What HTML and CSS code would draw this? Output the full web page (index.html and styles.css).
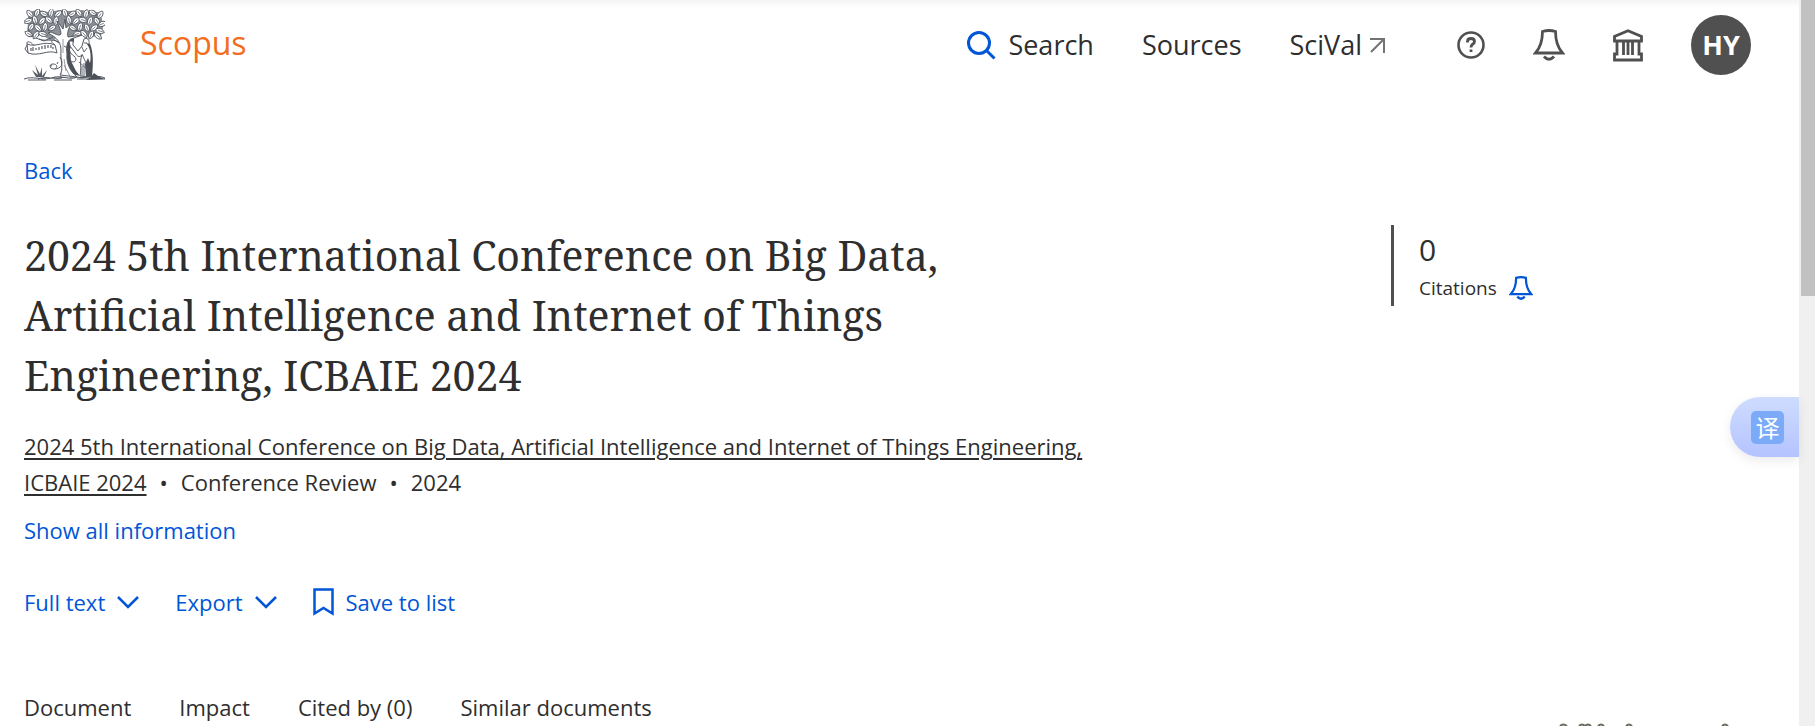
FILE: index.html
```html
<!DOCTYPE html>
<html lang="en">
<head>
    <meta charset="UTF-8">
    <meta name="viewport" content="width=device-width, initial-scale=1.0">
    <title>Scopus - Document details</title>
    <link rel="stylesheet" href="styles.css">
</head>
<body>

<div class="page">
    <header class="header">
        <a class="brand" href="#">
            <svg class="tree" viewBox="0 0 81 72" width="81" height="72" aria-hidden="true">
                <defs>
                    <g id="leaf">
                        <path d="M0-4.6C3-2.6 3.4 1.6 0 4.6C-3.4 1.6-3-2.6 0-4.6Z" fill="#fff" stroke="#565b64" stroke-width=".9"/>
                        <path d="M0-2V3.4" stroke="#565b64" stroke-width=".7"/>
                    </g>
                </defs>
                <!-- canopy -->
                <path d="M4 3L14 1 24 3 36 1 46 2 58 1 68 3 76 3 78 10 79 20 77 27 66 28 57 25 48 29 34 29 26 31 18 26 8 28 3 23 4 14Z" fill="#8c9096"/>
                <use href="#leaf" transform="translate(6 5) rotate(-40)"/>
                <use href="#leaf" transform="translate(13 4) rotate(25)"/>
                <use href="#leaf" transform="translate(20 5) rotate(-65)"/>
                <use href="#leaf" transform="translate(27 4) rotate(10)"/>
                <use href="#leaf" transform="translate(34 5) rotate(50)"/>
                <use href="#leaf" transform="translate(41 4) rotate(-20)"/>
                <use href="#leaf" transform="translate(48 5) rotate(60)"/>
                <use href="#leaf" transform="translate(55 4) rotate(-35)"/>
                <use href="#leaf" transform="translate(62 5) rotate(15)"/>
                <use href="#leaf" transform="translate(69 4) rotate(-60)"/>
                <use href="#leaf" transform="translate(76 6) rotate(35)"/>
                <use href="#leaf" transform="translate(4 12) rotate(70)"/>
                <use href="#leaf" transform="translate(11 11) rotate(-15)"/>
                <use href="#leaf" transform="translate(18 12) rotate(40)"/>
                <use href="#leaf" transform="translate(25 11) rotate(-50)"/>
                <use href="#leaf" transform="translate(32 12) rotate(5)"/>
                <use href="#leaf" transform="translate(45 11) rotate(-10)"/>
                <use href="#leaf" transform="translate(52 12) rotate(45)"/>
                <use href="#leaf" transform="translate(59 11) rotate(-70)"/>
                <use href="#leaf" transform="translate(66 12) rotate(20)"/>
                <use href="#leaf" transform="translate(73 12) rotate(-30)"/>
                <use href="#leaf" transform="translate(78 15) rotate(65)"/>
                <use href="#leaf" transform="translate(7 18) rotate(30)"/>
                <use href="#leaf" transform="translate(14 19) rotate(-45)"/>
                <use href="#leaf" transform="translate(21 18) rotate(10)"/>
                <use href="#leaf" transform="translate(28 19) rotate(60)"/>
                <use href="#leaf" transform="translate(49 19) rotate(-60)"/>
                <use href="#leaf" transform="translate(56 18) rotate(15)"/>
                <use href="#leaf" transform="translate(63 19) rotate(-25)"/>
                <use href="#leaf" transform="translate(70 19) rotate(50)"/>
                <use href="#leaf" transform="translate(76 22) rotate(-70)"/>
                <use href="#leaf" transform="translate(5 25) rotate(-60)"/>
                <use href="#leaf" transform="translate(12 26) rotate(35)"/>
                <use href="#leaf" transform="translate(19 25) rotate(-75)"/>
                <use href="#leaf" transform="translate(53 25) rotate(70)"/>
                <use href="#leaf" transform="translate(60 25) rotate(-40)"/>
                <use href="#leaf" transform="translate(67 26) rotate(25)"/>
                <use href="#leaf" transform="translate(74 27) rotate(-50)"/>
                <!-- shaded side of the trunk and the vine -->
                <path d="M42 28L50 27 50 32 46 40 47 52 52 62 56 67 48 65 43 58 40 46Z" fill="#4c5059"/>
                <path d="M36 66C40 60 36 50 37 42C37 34 34 29 24 24L27 23C33 26 36 27 37 25C37 20 34 16 33 12L36 16 39 20 41 10 42 19 48 14C44 20 43 24 44 28L58 26 47 30C43 32 42 38 43 45C42 54 46 62 53 68Z" fill="#fff" stroke="#565b64" stroke-width="1"/>
                <path d="M39 30V44M40 50L42 62M38 60L36 69M40 56L47 69" fill="none" stroke="#7c8087" stroke-width=".8"/>
                <path d="M40 37C46 40 46 45 50 47C54 50 51 55 47 52M36 48C40 54 38 60 30 60C25 60 25 55 29 55C33 55 34 58 31 60M28 57L26 56M33 55L34 53" fill="none" stroke="#565b64" stroke-width="1"/>
                <!-- banner -->
                <path d="M3 35C12 39 20 31 31 36L33 44C24 40 15 48 4 44Z" fill="#fff" stroke="#565b64" stroke-width="1"/>
                <path d="M3 35C2 31 8 33 10 37M31 36C26 33 27 30 31 31L35 34M4 44L1 40 3 36M15 30C22 33 28 29 34 33M12 29L20 32 29 28" fill="none" stroke="#565b64" stroke-width="1"/>
                <path d="M7 39V42M9 38V42M12 39V41M15 38V41M18 37V40M21 36V40M24 36V39M27 36V39M29 38V40" fill="none" stroke="#565b64" stroke-width="1.200"/>
                <!-- old man -->
                <path d="M60 30C63 28 66 31 65 35C68 41 68 54 66 68L56 67C58 58 55 54 58 46C55 49 53 47 52 45L46 37 45 32 49 32 49 36 54 42 58 37Z" fill="#fff" stroke="#565b64" stroke-width="1"/>
                <path d="M62 34C66 38 68 46 66 54L64 49 61 55 62 68 68 68C69 57 70 44 66 35Z" fill="#4c5059"/>
                <path d="M58 38L60 43 63 39M58 45L62 54M55 53L64 61M60 54V67M58 57V67M60 34H63" fill="none" stroke="#565b64" stroke-width=".9"/>
                <!-- ground and plants -->
                <path d="M0 70C10 66 18 72 28 69C37 65 45 72 53 68C61 71 71 64 81 69M14 70C22 66 30 71 38 69M4 71H22M30 71H48M53 70H81" fill="none" stroke="#565b64" stroke-width="1.1"/>
                <path d="M67 68L70 64 74 67 80 70 62 71Z" fill="#4c5059"/>
                <path d="M12 68L8 61 14 66 11 56 16 65 18 58 18 67 23 61 20 68Z" fill="#565b64"/>
            </svg>
            <span class="brand-name">Scopus</span>
        </a>
        <nav class="nav">
            <a class="nav-link search" href="#">
                <svg width="29" height="29" viewBox="0 0 29 29" aria-hidden="true"><circle cx="12" cy="12" r="10.5"/><path d="M19 19L27.500 27.500"/></svg>
                Search
            </a>
            <a class="nav-link" href="#">Sources</a>
            <a class="nav-link external" href="#">SciVal
                <svg width="15" height="15" viewBox="0 0 15 15" aria-hidden="true"><path d="M0 1H14V15M14 1L1 14"/></svg>
            </a>
        </nav>
        <div class="tools">
            <button type="button" class="icon-button" aria-label="Help">
                <svg width="28" height="28" viewBox="0 0 28 28"><circle cx="14" cy="14" r="12.500" stroke-width="2.600"/><path d="M10.500 11.500V10.500Q10.500 7.500 14 7.500Q17.500 7.500 17.500 10.500Q17.500 12 15.800 13Q14 14.200 14 16.500M14 18.600V21" stroke-width="2.800"/></svg>
            </button>
            <button type="button" class="icon-button" aria-label="Alerts">
                <svg width="32" height="32" viewBox="0 0 32 32"><path d="M9.500 2.500Q16 0.500 22.500 2.500Q22.500 16 29.500 24H2.500Q9.500 16 9.500 2.500Z" stroke-width="2.800"/><path d="M11 27.500Q16 33 21 27.500" stroke-width="3"/></svg>
            </button>
            <button type="button" class="icon-button" aria-label="Institution">
                <svg width="30" height="33" viewBox="0 0 30 33"><path d="M1.500 12V7.500L15 1.800 28.500 7.500V12ZM4 12V25H1.500V31H28.500V25H26V12M10.500 12V26M15 12V26M19.500 12V26" stroke-width="2.800"/></svg>
            </button>
            <button type="button" class="avatar">HY</button>
        </div>
    </header>

    <main class="content">
        <a class="link" href="#">Back</a>
        <div class="record">
            <div class="record-text">
                <h1>2024 5th International Conference on Big Data, Artificial Intelligence and Internet of Things Engineering, ICBAIE 2024</h1>
                <p class="source">
                    <a href="#">2024 5th International Conference on Big Data, Artificial Intelligence and Internet of Things Engineering, ICBAIE 2024</a><span class="dot">•</span>Conference Review<span class="dot">•</span>2024
                </p>
                <button type="button" class="link">Show all information</button>
            </div>
            <aside class="metrics">
                <div class="count">0</div>
                <div class="metric-label">
                    Citations
                    <button type="button" class="icon-button alert" aria-label="Set citation alert">
                        <svg width="24" height="24" viewBox="0 0 32 32"><path d="M9.500 2.500Q16 0.500 22.500 2.500Q22.500 16 29.500 24H2.500Q9.500 16 9.500 2.500Z" stroke-width="3"/><path d="M11 27.500Q16 33 21 27.500" stroke-width="3.200"/></svg>
                    </button>
                </div>
            </aside>
        </div>

        <div class="actions">
            <button type="button" class="link">Full text
                <svg width="22" height="14" viewBox="0 0 22 14" aria-hidden="true"><path d="M1 2L11 12 21 2"/></svg>
            </button>
            <button type="button" class="link">Export
                <svg width="22" height="14" viewBox="0 0 22 14" aria-hidden="true"><path d="M1 2L11 12 21 2"/></svg>
            </button>
            <button type="button" class="link">
                <svg width="21" height="28" viewBox="0 0 21 28" aria-hidden="true"><path d="M1.500 1.500H19.500V25.500L10.500 20 1.500 25.500Z"/></svg>
                Save to list
            </button>
        </div>

        <nav class="tabs">
            <a href="#">Document</a>
            <a href="#">Impact</a>
            <a href="#">Cited by (0)</a>
            <a href="#">Similar documents</a>
        </nav>
    </main>

    <button type="button" class="translate" lang="zh"><span>译</span></button>

    <svg class="cutoff" width="170" height="3" viewBox="0 0 170 3" aria-hidden="true"><path d="M1 3Q4 0 8 3M20 3Q23 0 26 3M26 3Q29 0 32 3M39 3Q42 0 45 3M67 3Q70 0 73 3M163 3Q166 0 169 3"/></svg>
</div>

<div class="scrollbar"><div class="thumb"></div></div>

</body>
</html>
```
FILE: styles.css
```css
* {
    box-sizing: border-box;
}

body {
    display: flex;
    height: 100vh;
    margin: 0;
    overflow: hidden;
    font-family: "Open Sans", "Noto Sans", sans-serif;
    font-size: 22px;
    line-height: 36px;
    color: #2e2e2e;
    background-color: #fff;
}

a {
    color: inherit;
    text-decoration: none;
}

button {
    padding: 0;
    border: none;
    background: none;
    font: inherit;
    color: inherit;
    cursor: pointer;
}

svg {
    flex: none;
    fill: none;
    stroke: currentColor;
}

.page {
    position: relative;
    flex: 1;
    background: linear-gradient(#f5f5f5, #fff 8px);
}

/* Header */
.header {
    display: flex;
    align-items: center;
    height: 90px;
    padding: 0 48px 0 24px;
}

.brand {
    display: flex;
    align-items: center;
    gap: 35px;
    margin-right: auto;
}

.tree {
    stroke: none;
}

.brand-name {
    padding-bottom: 4px;
    font-size: 32px;
    color: #f36d21;
}

.nav {
    display: flex;
    gap: 48px;
    margin-right: 72px;
}

.nav-link {
    display: flex;
    align-items: center;
    gap: 8px;
    font-size: 27px;
}

.search {
    gap: 12px;
}

.search svg {
    color: #0056d6;
    stroke-width: 3;
}

.external svg {
    color: #737373;
    stroke-width: 2;
}

.tools {
    display: flex;
    align-items: center;
    gap: 48px;
}

.icon-button {
    display: flex;
    color: #505050;
}

.avatar {
    width: 60px;
    height: 60px;
    border-radius: 50%;
    background-color: #505050;
    color: #fff;
    font-size: 27px;
    font-weight: bold;
}

/* Document record */
.content {
    padding: 62px 48px 0 24px;
}

.link {
    display: inline-flex;
    align-items: center;
    gap: 12px;
    color: #0056d6;
}

.link svg {
    stroke-width: 2.5;
}

.record {
    display: flex;
    justify-content: space-between;
    align-items: flex-start;
    margin-top: 37px;
}

.record-text {
    max-width: 1080px;
}

h1 {
    margin: 0;
    font-family: "Noto Serif", "Liberation Serif", serif;
    font-size: 41px;
    font-weight: normal;
    line-height: 60px;
}

.source {
    margin: 23px 0 12px;
}

.source a {
    text-decoration: underline;
    text-decoration-thickness: 2px;
    text-underline-offset: 3px;
}

.dot {
    margin: 0 13px;
}

.metrics {
    width: 360px;
    padding-left: 25px;
    border-left: 3px solid #505050;
}

.count {
    padding-top: 5px;
    font-size: 30px;
    line-height: 40px;
}

.metric-label {
    display: flex;
    align-items: center;
    gap: 12px;
    font-size: 19px;
}

.alert {
    color: #0056d6;
}

.actions {
    display: flex;
    gap: 36px;
    margin-top: 36px;
}

.tabs {
    display: flex;
    gap: 48px;
    margin-top: 69px;
}

/* Translate button on the page edge */
.translate {
    position: absolute;
    top: 397px;
    right: 0;
    width: 69px;
    height: 60px;
    padding-left: 21px;
    border-radius: 30px 0 0 30px;
    background: linear-gradient(#cfdcff, #b4c3ff);
    box-shadow: 0 4px 12px rgba(0, 0, 0, 0.08);
}

.translate span {
    display: block;
    width: 33px;
    height: 33px;
    border-radius: 5px;
    background-color: #7aaaf8;
    color: #fff;
    font-family: "Noto Sans CJK SC", sans-serif;
    font-size: 24px;
    line-height: 31px;
}

.cutoff {
    position: absolute;
    right: 70px;
    bottom: 0;
    color: #6b6b5f;
    stroke-width: 2;
}

/* Scrollbar */
.scrollbar {
    width: 16px;
    padding-left: 2px;
    background-color: #f0f0f0;
}

.thumb {
    height: 296px;
    background-color: #c1c1c1;
}
```
